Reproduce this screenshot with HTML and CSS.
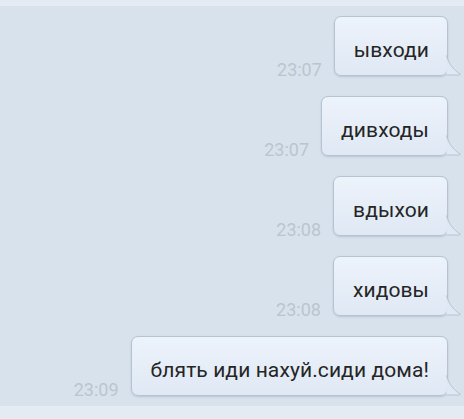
FILE: index.html
```html
<!DOCTYPE html>
<html>
<head lang="ru">
    <meta charset="UTF-8">
    <title>Чат</title>
    <link rel="stylesheet" href="styles.css">
</head>
<body>
<div class="top"></div>
<div class="chat">
    <div class="row">
        <span class="time">23:07</span>
        <div class="bubble">ывходи<svg class="tail" width="16" height="21" viewBox="0 0 16 21"><path d="M0.5 0.5 C2 7 7 15 14.5 19 L13.5 20 L0.5 20"/></svg></div>
    </div>
    <div class="row">
        <span class="time">23:07</span>
        <div class="bubble">дивходы<svg class="tail" width="16" height="21" viewBox="0 0 16 21"><path d="M0.5 0.5 C2 7 7 15 14.5 19 L13.5 20 L0.5 20"/></svg></div>
    </div>
    <div class="row">
        <span class="time">23:08</span>
        <div class="bubble">вдыхои<svg class="tail" width="16" height="21" viewBox="0 0 16 21"><path d="M0.5 0.5 C2 7 7 15 14.5 19 L13.5 20 L0.5 20"/></svg></div>
    </div>
    <div class="row">
        <span class="time">23:08</span>
        <div class="bubble">хидовы<svg class="tail" width="16" height="21" viewBox="0 0 16 21"><path d="M0.5 0.5 C2 7 7 15 14.5 19 L13.5 20 L0.5 20"/></svg></div>
    </div>
    <div class="row">
        <span class="time">23:09</span>
        <div class="bubble">блять иди нахуй.сиди дома!<svg class="tail" width="16" height="21" viewBox="0 0 16 21"><path d="M0.5 0.5 C2 7 7 15 14.5 19 L13.5 20 L0.5 20"/></svg></div>
    </div>
</div>
<div class="bottom"></div>
</body>
</html>
```

FILE: styles.css
```css
* {
    padding: 0;
    margin: 0;
}
html, body {
    height: 100%;
}
body {
    background-color: #d8e2ec;
    font-family: Roboto, "Noto Sans", sans-serif;
    display: flex;
    flex-direction: column;
    overflow: hidden;
}
.top {
    height: 6px;
    background-color: #e5ebf2;
}
.chat {
    height: 400px;
    box-sizing: border-box;
    padding: 10px 16px 0 0;
    display: flex;
    flex-direction: column;
    align-items: flex-end;
    gap: 20px;
}
.bottom {
    flex: 1;
    background-color: #e5ebf2;
}
.row {
    display: flex;
    align-items: flex-end;
    gap: 12px;
}
.time {
    font-size: 18px;
    line-height: 18px;
    color: #bcc5cf;
    margin-bottom: -3px;
}
.bubble {
    position: relative;
    height: 60px;
    box-sizing: border-box;
    padding: 7px 18px 0 19px;
    display: flex;
    align-items: center;
    font-size: 21px;
    letter-spacing: 0.1px;
    color: #252525;
    background: linear-gradient(#edf3fb, #dfe8f4);
    border: 1px solid #b6c3d2;
    border-radius: 7px;
    box-shadow: 0 1px 2px rgba(90, 110, 140, 0.25);
}
.tail {
    position: absolute;
    right: -15px;
    bottom: -1px;
    overflow: visible;
}
.tail path {
    fill: #dfe8f4;
    stroke: #b6c3d2;
    stroke-width: 1;
}
```
